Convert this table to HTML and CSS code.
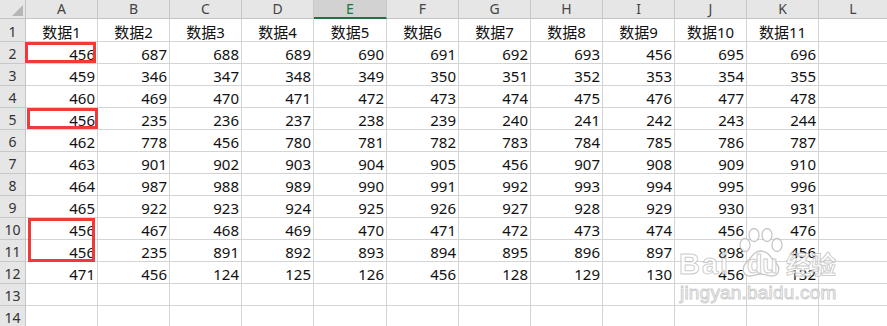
FILE: index.html
```html
<!DOCTYPE html>
<html lang="zh-CN">
<head>
<meta charset="utf-8">
<title>Sheet</title>
<link rel="stylesheet" href="styles.css">
</head>
<body>
<div class="sheet">
  <div class="grid">
    <div class="corner"><span class="tri"></span></div>
    <div class="ch">A</div><div class="ch">B</div><div class="ch">C</div><div class="ch">D</div><div class="ch sel">E</div><div class="ch">F</div><div class="ch">G</div><div class="ch">H</div><div class="ch">I</div><div class="ch">J</div><div class="ch">K</div><div class="ch last">L</div>

    <div class="rh">1</div><div class="c t">数据1</div><div class="c t">数据2</div><div class="c t">数据3</div><div class="c t">数据4</div><div class="c t">数据5</div><div class="c t">数据6</div><div class="c t">数据7</div><div class="c t">数据8</div><div class="c t">数据9</div><div class="c t">数据10</div><div class="c t">数据11</div><div class="c last"></div>

    <div class="rh">2</div><div class="c">456</div><div class="c">687</div><div class="c">688</div><div class="c">689</div><div class="c">690</div><div class="c">691</div><div class="c">692</div><div class="c">693</div><div class="c">456</div><div class="c">695</div><div class="c">696</div><div class="c last"></div>

    <div class="rh">3</div><div class="c">459</div><div class="c">346</div><div class="c">347</div><div class="c">348</div><div class="c">349</div><div class="c">350</div><div class="c">351</div><div class="c">352</div><div class="c">353</div><div class="c">354</div><div class="c">355</div><div class="c last"></div>

    <div class="rh">4</div><div class="c">460</div><div class="c">469</div><div class="c">470</div><div class="c">471</div><div class="c">472</div><div class="c">473</div><div class="c">474</div><div class="c">475</div><div class="c">476</div><div class="c">477</div><div class="c">478</div><div class="c last"></div>

    <div class="rh">5</div><div class="c">456</div><div class="c">235</div><div class="c">236</div><div class="c">237</div><div class="c">238</div><div class="c">239</div><div class="c">240</div><div class="c">241</div><div class="c">242</div><div class="c">243</div><div class="c">244</div><div class="c last"></div>

    <div class="rh">6</div><div class="c">462</div><div class="c">778</div><div class="c">456</div><div class="c">780</div><div class="c">781</div><div class="c">782</div><div class="c">783</div><div class="c">784</div><div class="c">785</div><div class="c">786</div><div class="c">787</div><div class="c last"></div>

    <div class="rh">7</div><div class="c">463</div><div class="c">901</div><div class="c">902</div><div class="c">903</div><div class="c">904</div><div class="c">905</div><div class="c">456</div><div class="c">907</div><div class="c">908</div><div class="c">909</div><div class="c">910</div><div class="c last"></div>

    <div class="rh">8</div><div class="c">464</div><div class="c">987</div><div class="c">988</div><div class="c">989</div><div class="c">990</div><div class="c">991</div><div class="c">992</div><div class="c">993</div><div class="c">994</div><div class="c">995</div><div class="c">996</div><div class="c last"></div>

    <div class="rh">9</div><div class="c">465</div><div class="c">922</div><div class="c">923</div><div class="c">924</div><div class="c">925</div><div class="c">926</div><div class="c">927</div><div class="c">928</div><div class="c">929</div><div class="c">930</div><div class="c">931</div><div class="c last"></div>

    <div class="rh">10</div><div class="c">456</div><div class="c">467</div><div class="c">468</div><div class="c">469</div><div class="c">470</div><div class="c">471</div><div class="c">472</div><div class="c">473</div><div class="c">474</div><div class="c">456</div><div class="c">476</div><div class="c last"></div>

    <div class="rh">11</div><div class="c">456</div><div class="c">235</div><div class="c">891</div><div class="c">892</div><div class="c">893</div><div class="c">894</div><div class="c">895</div><div class="c">896</div><div class="c">897</div><div class="c">898</div><div class="c">456</div><div class="c last"></div>

    <div class="rh">12</div><div class="c">471</div><div class="c">456</div><div class="c">124</div><div class="c">125</div><div class="c">126</div><div class="c">456</div><div class="c">128</div><div class="c">129</div><div class="c">130</div><div class="c">456</div><div class="c">132</div><div class="c last"></div>

    <div class="rh">13</div><div class="c"></div><div class="c"></div><div class="c"></div><div class="c"></div><div class="c"></div><div class="c"></div><div class="c"></div><div class="c"></div><div class="c"></div><div class="c"></div><div class="c"></div><div class="c last"></div>

    <div class="rh">14</div><div class="c"></div><div class="c"></div><div class="c"></div><div class="c"></div><div class="c"></div><div class="c"></div><div class="c"></div><div class="c"></div><div class="c"></div><div class="c"></div><div class="c"></div><div class="c last"></div>
  </div>

  <div class="mark m1"></div>
  <div class="mark m2"></div>
  <div class="mark m3"></div>

  <div class="wm">
    <span class="wm-bai">Bai</span>
    <svg class="wm-paw" width="46" height="50" viewBox="0 0 46 50">
      <g fill="rgba(255,255,255,0.85)" stroke="rgba(175,175,175,0.7)" stroke-width="1.3">
        <ellipse cx="7" cy="17" rx="5" ry="6.5"/>
        <ellipse cx="16" cy="7" rx="5" ry="6.5"/>
        <ellipse cx="29" cy="7" rx="5" ry="6.5"/>
        <ellipse cx="39" cy="17" rx="5" ry="6.5"/>
        <path d="M23 23 C16 23 13 30 8 35 C3 40 5 48 12 48 C17 48 19 46 23 46 C27 46 29 48 34 48 C41 48 43 40 38 35 C33 30 30 23 23 23 Z"/>
      </g>
    </svg>
    <span class="wm-du">du</span>
    <span class="wm-jy">经验</span>
    <span class="wm-url">jingyan.baidu.com</span>
  </div>
</div>
</body>
</html>
```

FILE: styles.css
```css
html, body {
  margin: 0;
  padding: 0;
  background: #ffffff;
}

.sheet {
  position: relative;
  width: 887px;
  height: 326px;
  overflow: hidden;
  font-family: "Noto Sans", "Noto Sans CJK SC", sans-serif;
}

.grid {
  display: grid;
  grid-template-columns: 26px 72px 72px 72px 72px 73px 72px 72px 72px 72px 72px 72px 1fr;
  grid-template-rows: 19px 23px repeat(13, 22px);
}

.grid > div {
  box-sizing: border-box;
  border-right: 1px solid #d4d4d4;
  border-bottom: 1px solid #d4d4d4;
}

.corner {
  position: relative;
  background: #e6e6e6;
  border-right-color: #c4c4c4 !important;
  border-bottom-color: #c4c4c4 !important;
}

.tri {
  position: absolute;
  right: 2px;
  bottom: 2px;
  width: 0;
  height: 0;
  border-left: 11px solid transparent;
  border-bottom: 11px solid #b6b6b6;
}

.ch {
  background: #e6e6e6;
  border-right-color: #c8c8c8 !important;
  border-bottom-color: #c4c4c4 !important;
  color: #444444;
  font-size: 14px;
  line-height: 18px;
  text-align: center;
}

.ch.sel {
  background: #d2d2d2;
  color: #217346;
  border-bottom: 2px solid #217346 !important;
}

.rh {
  background: #e6e6e6;
  border-right-color: #c4c4c4 !important;
  border-bottom-color: #c8c8c8 !important;
  color: #333333;
  font-size: 14px;
  line-height: 18px;
  display: flex;
  align-items: flex-end;
  justify-content: center;
  padding-bottom: 0;
}

.c {
  display: flex;
  align-items: flex-end;
  justify-content: flex-end;
  padding-right: 2px;
  font-size: 15px;
  line-height: 18px;
  color: #111111;
}

.c.t {
  justify-content: center;
  padding-right: 0;
}

.grid > .last {
  border-right: none;
}

.mark {
  position: absolute;
  box-sizing: border-box;
  border: 3px solid #f03a3a;
}

.m1 { left: 25px; top: 42px; width: 71px; height: 21px; }
.m2 { left: 27px; top: 108px; width: 71px; height: 21px; }
.m3 { left: 28px; top: 218px; width: 67px; height: 44px; }

.wm {
  position: absolute;
  left: 0;
  top: 0;
  width: 887px;
  height: 326px;
  pointer-events: none;
  font-family: "Liberation Sans", Arial, sans-serif;
  font-weight: bold;
  color: rgba(255, 255, 255, 0.8);
  -webkit-text-stroke: 1px rgba(170, 170, 170, 0.6);
}

.wm span {
  position: absolute;
  white-space: nowrap;
}

.wm-bai {
  left: 679px;
  top: 249px;
  font-size: 29px;
  line-height: 30px;
  letter-spacing: 2px;
}

.wm-paw {
  position: absolute;
  left: 738px;
  top: 228px;
}

.wm-du {
  left: 747px;
  top: 251px;
  font-size: 25px;
  line-height: 26px;
}

.wm-jy {
  left: 786px;
  top: 249px;
  font-size: 25px;
  line-height: 28px;
  font-family: "Noto Sans CJK SC", sans-serif;
}

.wm-url {
  left: 680px;
  top: 282px;
  font-size: 19px;
  line-height: 22px;
  font-weight: normal;
  letter-spacing: 0.2px;
}
```
